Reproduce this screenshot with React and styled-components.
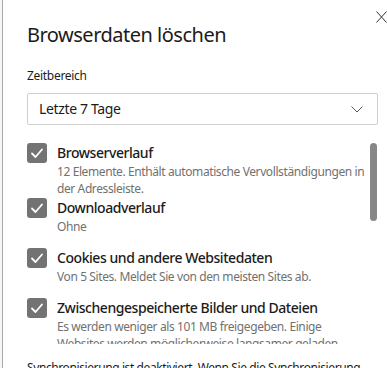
import React from "react";
import styled, { createGlobalStyle } from "styled-components";

const Global = createGlobalStyle`
  html, body { margin: 0; padding: 0; background: #ffffff; }
  body { overflow: hidden; height: 368px; font-family: "Noto Sans", "Open Sans", sans-serif; }
  * { box-sizing: border-box; }
`;

const Page = styled.div`
  display: flex;
  height: 368px;
  overflow: hidden;
  background: #f6f6f6;
  padding-left: 2px;
`;

const Dialog = styled.div`
  position: relative;
  flex: 1;
  min-width: 0;
  background: #ffffff;
  border-left: 1px solid #a8a8a8;
  padding: 21px 9px 0 24px;
  display: flex;
  flex-direction: column;
  color: #1b1b1b;
  & > * { flex: none; }
`;

const Close = styled.button`
  position: absolute;
  top: 11px;
  right: 0;
  width: 11px;
  height: 12px;
  padding: 0;
  border: 0;
  background: transparent;
  display: flex;
`;

const Title = styled.h1`
  margin: 0;
  font-size: 20px;
  line-height: 28px;
  font-weight: 400;
  letter-spacing: -0.5px;
  color: #1b1b1b;
`;

const Label = styled.div`
  margin-top: 19px;
  font-size: 12px;
  line-height: 16px;
  letter-spacing: -0.3px;
  color: #1b1b1b;
`;

const Select = styled.div`
  margin-top: 9px;
  height: 32px;
  border: 1px solid #cfcfcf;
  border-radius: 2px;
  display: flex;
  align-items: center;
  justify-content: space-between;
  padding: 0 14px 0 11px;
  font-size: 14px;
  line-height: 20px;
  letter-spacing: -0.35px;
`;

const ListWrap = styled.div`
  position: relative;
  margin-top: 18px;
  height: 201px;
  overflow: hidden;
`;

const Thumb = styled.div`
  position: absolute;
  top: 0;
  right: 1px;
  width: 7px;
  height: 78px;
  border-radius: 4px;
  background: #878787;
`;

const Item = styled.div`
  display: grid;
  grid-template-columns: 20px 1fr;
  column-gap: 10px;
  min-height: 50px;
  padding-bottom: 1px;
  align-content: start;
`;

const Box = styled.span`
  width: 20px;
  height: 20px;
  border-radius: 3px;
  background: #737373;
  display: flex;
  align-items: center;
  justify-content: center;
`;

const ItemText = styled.div`
  padding-right: 8px;
`;

const ItemTitle = styled.div`
  font-size: 14px;
  line-height: 20px;
  font-weight: 500;
  letter-spacing: -0.45px;
  color: #1b1b1b;
`;

const ItemDesc = styled.div`
  font-size: 12px;
  line-height: 17px;
  letter-spacing: -0.4px;
  color: #717171;
`;

const Footer = styled.div`
  margin-top: 15px;
  font-size: 12px;
  line-height: 18px;
  letter-spacing: -0.4px;
  color: #1b1b1b;
`;

const items = [
  {
    title: "Browserverlauf",
    desc: "12 Elemente. Enthält automatische Vervollständigungen in der Adressleiste.",
  },
  { title: "Downloadverlauf", desc: "Ohne" },
  {
    title: "Cookies und andere Websitedaten",
    desc: "Von 5 Sites. Meldet Sie von den meisten Sites ab.",
  },
  {
    title: "Zwischengespeicherte Bilder und Dateien",
    desc: "Es werden weniger als 101 MB freigegeben. Einige Websites werden möglicherweise langsamer geladen, wenn Sie sie das nächste Mal besuchen.",
  },
];

const Check = () => (
  <svg width="20" height="20" viewBox="0 0 20 20">
    <polyline points="5,10.5 8.5,14 15,6.5" fill="none" stroke="#fff" strokeWidth="1.8" strokeLinecap="round" strokeLinejoin="round" />
  </svg>
);

export default function App() {
  return (
    <>
      <Global />
      <Page>
        <Dialog>
          <Close aria-label="Schließen">
            <svg width="11" height="12" viewBox="0 0 11 12">
              <path d="M0.5 0.5 L10.5 11.5 M10.5 0.5 L0.5 11.5" stroke="#333" strokeWidth="1" fill="none" />
            </svg>
          </Close>
          <Title>Browserdaten löschen</Title>
          <Label>Zeitbereich</Label>
          <Select>
            <span>Letzte 7 Tage</span>
            <svg width="12" height="7" viewBox="0 0 12 7">
              <path d="M0.5 0.5 L6 6 L11.5 0.5" stroke="#555" strokeWidth="1" fill="none" />
            </svg>
          </Select>
          <ListWrap>
            {items.map((it) => (
              <Item key={it.title}>
                <Box><Check /></Box>
                <ItemText>
                  <ItemTitle>{it.title}</ItemTitle>
                  <ItemDesc>{it.desc}</ItemDesc>
                </ItemText>
              </Item>
            ))}
            <Thumb />
          </ListWrap>
          <Footer>Synchronisierung ist deaktiviert. Wenn Sie die Synchronisierung aktivieren, werden die Daten auf allen Geräten gelöscht.</Footer>
        </Dialog>
      </Page>
    </>
  );
}
